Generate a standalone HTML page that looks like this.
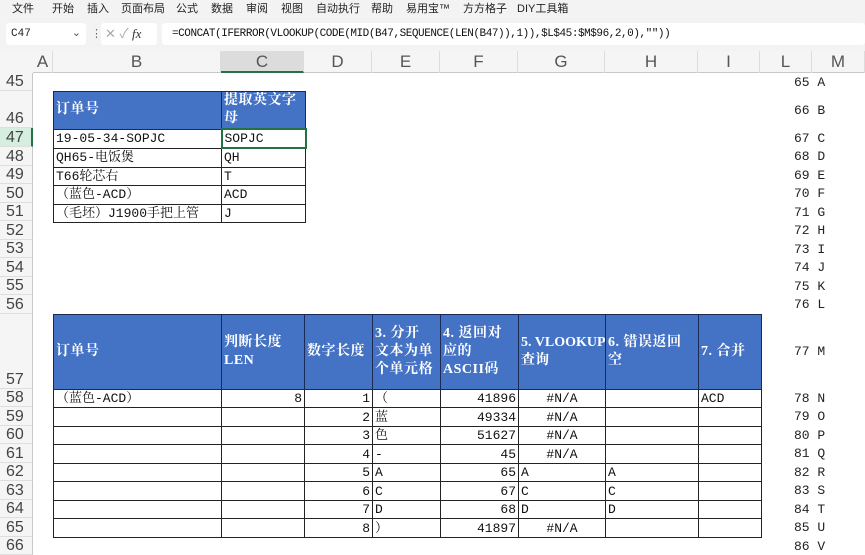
<!DOCTYPE html><html><head><meta charset="utf-8"><style>
*{margin:0;padding:0;box-sizing:border-box}
body{width:865px;height:551px;overflow:hidden;background:#fff;font-family:"Liberation Sans","Noto Sans CJK SC",sans-serif;position:relative}
.a{position:absolute}
.menu{left:0;top:0;width:865px;height:17px;background:#f3f3f3;font-size:11px;color:#222}
.menu span{position:absolute;top:0px}
.fb{left:0;top:17px;width:865px;height:34px;background:#f3f3f3}
.hdr{left:0;top:51px;width:865px;height:22px;background:#f5f5f5;border-bottom:1px solid #c8c8c8}
.ch{position:absolute;top:51px;height:22px;font-size:17px;color:#555;text-align:center;line-height:22px;border-right:1px solid #dcdcdc}
.rh{position:absolute;left:0;width:33px;background:#f5f5f5;border-bottom:1px solid #dedede;border-right:1px solid #c8c8c8;font-size:16px;color:#444;padding-left:6px;display:flex;align-items:flex-end;line-height:17px}
table{position:absolute;border-collapse:collapse;font-family:"Liberation Mono","Noto Serif CJK SC",serif;font-size:13px;color:#111;table-layout:fixed}
td{border:1px solid #222;padding:0 2px;white-space:nowrap;overflow:hidden;line-height:15px}
th{background:#4472c4;color:#fff;border:1px solid #1a2a55;font-weight:bold;text-align:left;padding:0 2px;font-size:14px;line-height:18px;font-family:"Liberation Serif","Noto Serif CJK SC",serif;vertical-align:middle;white-space:nowrap;overflow:hidden;letter-spacing:0.5px}
.r{text-align:right}.c{text-align:center}
.lm{position:absolute;font-family:"Liberation Mono","Noto Serif CJK SC",serif;font-size:13px;color:#222}
</style></head><body>
<div class="a menu">
<span style="left:12px">文件</span><span style="left:52px">开始</span><span style="left:87px">插入</span><span style="left:121px">页面布局</span><span style="left:176px">公式</span><span style="left:211px">数据</span><span style="left:246px">审阅</span><span style="left:281px">视图</span><span style="left:316px">自动执行</span><span style="left:371px">帮助</span><span style="left:406px">易用宝™</span><span style="left:463px">方方格子</span><span style="left:517px">DIY工具箱</span>
</div>
<div class="a fb"></div>
<div class="a" style="left:6px;top:23px;width:80px;height:22px;background:#fff;border-radius:3px;font-size:11px;line-height:22px;padding-left:5px;color:#222;font-family:'Liberation Mono',monospace">C47<span style="position:absolute;right:5px;color:#555">⌄</span></div>
<div class="a" style="left:91px;top:27px;font-size:11px;color:#666">⋮</div>
<div class="a" style="left:101px;top:23px;width:56px;height:22px;background:#fff;border-radius:3px;font-size:13px;line-height:22px;color:#aaa;padding-left:4px">✕ ✓ <i style="color:#333;font-family:'Liberation Serif',serif">fx</i></div>
<div class="a" style="left:162px;top:23px;width:703px;height:22px;background:#fff;border-radius:3px;font-size:11px;line-height:22px;padding-left:10px;color:#111;font-family:'Liberation Mono','Noto Serif CJK SC',monospace;letter-spacing:-0.45px">=CONCAT(IFERROR(VLOOKUP(CODE(MID(B47,SEQUENCE(LEN(B47)),1)),$L$45:$M$96,2,0),""))</div>
<div class="a hdr"></div>
<div class="ch" style="left:33px;width:20px">A</div>
<div class="ch" style="left:53px;width:168px">B</div>
<div class="ch" style="left:221px;width:83px;background:#dcdcdc;border-bottom:2px solid #217346">C</div>
<div class="ch" style="left:304px;width:68px">D</div>
<div class="ch" style="left:372px;width:68px">E</div>
<div class="ch" style="left:440px;width:78px">F</div>
<div class="ch" style="left:518px;width:87px">G</div>
<div class="ch" style="left:605px;width:93px">H</div>
<div class="ch" style="left:698px;width:62px">I</div>
<div class="ch" style="left:760px;width:52px">L</div>
<div class="ch" style="left:812px;width:53px">M</div>
<div class="a" style="left:0;top:51px;width:33px;height:22px;background:#f5f5f5"></div>

<div class="rh" style="top:73px;height:18px">45</div>
<div class="rh" style="top:91px;height:37px;">46</div>
<div class="rh" style="top:128px;height:19px;background:#d6eede;border-right:2px solid #217346">47</div>
<div class="rh" style="top:147px;height:19px">48</div>
<div class="rh" style="top:166px;height:18px">49</div>
<div class="rh" style="top:184px;height:19px">50</div>
<div class="rh" style="top:203px;height:18px">51</div>
<div class="rh" style="top:221px;height:19px">52</div>
<div class="rh" style="top:240px;height:18px">53</div>
<div class="rh" style="top:258px;height:19px">54</div>
<div class="rh" style="top:277px;height:18px">55</div>
<div class="rh" style="top:295px;height:19px">56</div>
<div class="rh" style="top:314px;height:75px">57</div>
<div class="rh" style="top:389px;height:18px">58</div>
<div class="rh" style="top:407px;height:19px">59</div>
<div class="rh" style="top:426px;height:18px">60</div>
<div class="rh" style="top:444px;height:19px">61</div>
<div class="rh" style="top:463px;height:18px">62</div>
<div class="rh" style="top:481px;height:19px">63</div>
<div class="rh" style="top:500px;height:18px">64</div>
<div class="rh" style="top:518px;height:19px">65</div>
<div class="rh" style="top:537px;height:18px">66</div>

<table style="left:53px;top:91px;width:252px">
<colgroup><col style="width:168px"><col style="width:84px"></colgroup>
<tr style="height:37px"><th>订单号</th><th>提取英文字<br>母</th></tr>
<tr style="height:19px"><td>19-05-34-SOPJC</td><td style="border:2px solid #217346">SOPJC</td></tr>
<tr style="height:19px"><td>QH65-电饭煲</td><td>QH</td></tr>
<tr style="height:18px"><td>T66轮芯右</td><td>T</td></tr>
<tr style="height:19px"><td>（蓝色-ACD）</td><td>ACD</td></tr>
<tr style="height:18px"><td>（毛坯）J1900手把上管</td><td>J</td></tr>
</table>

<table style="left:53px;top:314px;width:708px">
<colgroup><col style="width:168px"><col style="width:83px"><col style="width:68px"><col style="width:68px"><col style="width:78px"><col style="width:87px"><col style="width:93px"><col style="width:63px"></colgroup>
<tr style="height:75px"><th>订单号</th><th>判断长度<br>LEN</th><th>数字长度</th><th>3. 分开<br>文本为单<br>个单元格</th><th>4. 返回对<br>应的<br>ASCII码</th><th style="letter-spacing:0">5. VLOOKUP<br>查询</th><th>6. 错误返回<br>空</th><th>7. 合并</th></tr>
<tr style="height:18px"><td>（蓝色-ACD）</td><td class="r">8</td><td class="r">1</td><td>（</td><td class="r">41896</td><td class="c">#N/A</td><td></td><td>ACD</td></tr>
<tr style="height:19px"><td></td><td></td><td class="r">2</td><td>蓝</td><td class="r">49334</td><td class="c">#N/A</td><td></td><td></td></tr>
<tr style="height:18px"><td></td><td></td><td class="r">3</td><td>色</td><td class="r">51627</td><td class="c">#N/A</td><td></td><td></td></tr>
<tr style="height:19px"><td></td><td></td><td class="r">4</td><td>-</td><td class="r">45</td><td class="c">#N/A</td><td></td><td></td></tr>
<tr style="height:18px"><td></td><td></td><td class="r">5</td><td>A</td><td class="r">65</td><td>A</td><td>A</td><td></td></tr>
<tr style="height:19px"><td></td><td></td><td class="r">6</td><td>C</td><td class="r">67</td><td>C</td><td>C</td><td></td></tr>
<tr style="height:18px"><td></td><td></td><td class="r">7</td><td>D</td><td class="r">68</td><td>D</td><td>D</td><td></td></tr>
<tr style="height:19px"><td></td><td></td><td class="r">8</td><td>）</td><td class="r">41897</td><td class="c">#N/A</td><td></td><td></td></tr>
</table>

<div class="lm" style="left:794px;top:75px">65 A</div>
<div class="lm" style="left:794px;top:103px">66 B</div>
<div class="lm" style="left:794px;top:131px">67 C</div>
<div class="lm" style="left:794px;top:149px">68 D</div>
<div class="lm" style="left:794px;top:168px">69 E</div>
<div class="lm" style="left:794px;top:186px">70 F</div>
<div class="lm" style="left:794px;top:205px">71 G</div>
<div class="lm" style="left:794px;top:223px">72 H</div>
<div class="lm" style="left:794px;top:242px">73 I</div>
<div class="lm" style="left:794px;top:260px">74 J</div>
<div class="lm" style="left:794px;top:279px">75 K</div>
<div class="lm" style="left:794px;top:297px">76 L</div>
<div class="lm" style="left:794px;top:344px">77 M</div>
<div class="lm" style="left:794px;top:391px">78 N</div>
<div class="lm" style="left:794px;top:409px">79 O</div>
<div class="lm" style="left:794px;top:428px">80 P</div>
<div class="lm" style="left:794px;top:446px">81 Q</div>
<div class="lm" style="left:794px;top:465px">82 R</div>
<div class="lm" style="left:794px;top:483px">83 S</div>
<div class="lm" style="left:794px;top:502px">84 T</div>
<div class="lm" style="left:794px;top:520px">85 U</div>
<div class="lm" style="left:794px;top:539px">86 V</div>
</body></html>
